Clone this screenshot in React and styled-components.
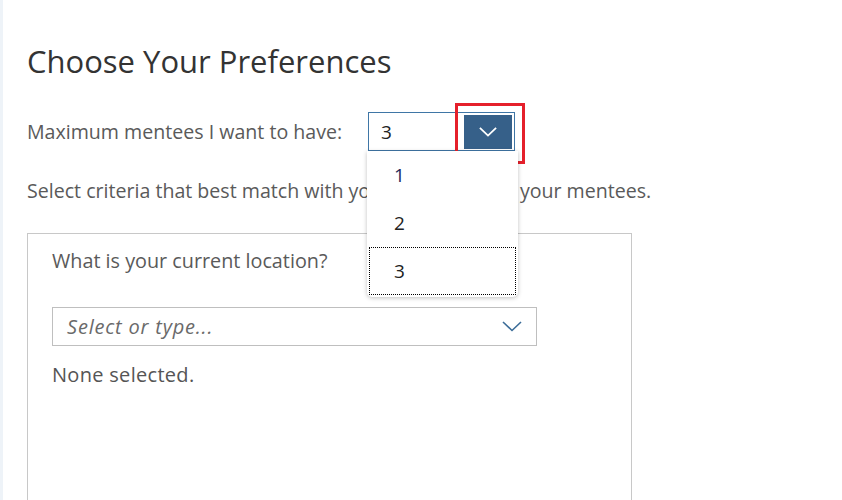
import React from "react";
import styled, { createGlobalStyle } from "styled-components";

const Global = createGlobalStyle`
  html, body { margin: 0; padding: 0; background: #fff; }
  body { font-family: "Open Sans", "Noto Sans", sans-serif; color: #333; }
`;

const Page = styled.div`
  height: 500px;
  overflow: hidden;
  border-left: 3px solid #eef3f8;
  padding: 0 0 0 24px;
  box-sizing: border-box;
`;

const Title = styled.h1`
  margin: 0;
  padding-top: 42px;
  font-size: 31px;
  font-weight: 400;
  line-height: 38px;
  color: #333;
`;

const Row = styled.div`
  display: flex;
  align-items: center;
  margin-top: 32px;
  height: 39px;
`;

const Label = styled.span`
  font-size: 19.6px;
  color: #5a5a5a;
  width: 341px;
`;

const SelectWrap = styled.div`
  position: relative;
  width: 147px;
  height: 39px;
`;

const SelectBox = styled.div`
  box-sizing: border-box;
  height: 39px;
  border: 1px solid #3f76a6;
  display: flex;
  align-items: center;
  justify-content: space-between;
  padding: 2px 2px 1px 12px;
  font-size: 19px;
  color: #222;
`;

const ArrowButton = styled.div`
  width: 48px;
  height: 100%;
  background: #366089;
  display: flex;
  align-items: center;
  justify-content: center;
`;

const Highlight = styled.div`
  position: absolute;
  left: 87px;
  top: -9px;
  width: 70px;
  height: 61px;
  border: 3px solid #e5202b;
  box-sizing: border-box;
  pointer-events: none;
`;

const Menu = styled.ul`
  position: absolute;
  left: -1px;
  top: 39px;
  width: 151px;
  margin: 0;
  padding: 0 2px 2px 2px;
  box-sizing: border-box;
  list-style: none;
  background: #fff;
  border-radius: 0 0 5px 5px;
  box-shadow: 0 1px 4px rgba(0, 0, 0, 0.25);
  z-index: 2;
`;

const Item = styled.li`
  height: 48px;
  box-sizing: border-box;
  display: flex;
  align-items: center;
  padding-left: ${(p) => (p.$focused ? "24px" : "25px")};
  font-size: 19px;
  color: ${(p) => (p.$first ? "#1d2a5a" : "#222")};
  border: ${(p) => (p.$focused ? "1px dotted #000" : "none")};
`;

const Hint = styled.p`
  margin: 28px 0 0 0;
  font-size: 19.6px;
  line-height: 24px;
  color: #5a5a5a;
  white-space: nowrap;
`;

const Card = styled.div`
  margin-top: 30px;
  width: 605px;
  height: 300px;
  box-sizing: border-box;
  border: 1px solid #c8c8c8;
  border-bottom: none;
  padding: 15px 24px 0 24px;
`;

const Question = styled.div`
  font-size: 19.8px;
  line-height: 24px;
  color: #5a5a5a;
`;

const ComboInput = styled.div`
  margin-top: 34px;
  width: 485px;
  height: 39px;
  box-sizing: border-box;
  border: 1px solid #bfbfbf;
  display: flex;
  align-items: center;
  justify-content: space-between;
  padding: 0 14px 0 14px;
`;

const Placeholder = styled.span`
  font-size: 20px;
  font-style: italic;
  letter-spacing: 0.8px;
  color: #6a6a6a;
`;

const Status = styled.div`
  margin-top: 17px;
  font-size: 20px;
  line-height: 24px;
  letter-spacing: 0.3px;
  color: #555;
`;

const Chevron = ({ color, w = 20, h = 11, sw = 1.8 }) => (
  <svg width={w} height={h} viewBox="0 0 20 11" fill="none">
    <path d="M1 1 L10 9.5 L19 1" stroke={color} strokeWidth={sw} />
  </svg>
);

export default function App() {
  return (
    <>
      <Global />
      <Page>
        <Title>Choose Your Preferences</Title>
        <Row>
          <Label>Maximum mentees I want to have:</Label>
          <SelectWrap>
            <SelectBox>
              <span>3</span>
              <ArrowButton>
                <Chevron color="#fff" w={18} h={10} sw={2} />
              </ArrowButton>
            </SelectBox>
            <Highlight />
            <Menu>
              <Item $first>1</Item>
              <Item>2</Item>
              <Item $focused>3</Item>
            </Menu>
          </SelectWrap>
        </Row>
        <Hint>Select criteria that best match with your interests and your mentees.</Hint>
        <Card>
          <Question>What is your current location?</Question>
          <ComboInput>
            <Placeholder>Select or type...</Placeholder>
            <Chevron color="#3b6c98" w={20} h={11} sw={1.6} />
          </ComboInput>
          <Status>None selected.</Status>
        </Card>
      </Page>
    </>
  );
}
